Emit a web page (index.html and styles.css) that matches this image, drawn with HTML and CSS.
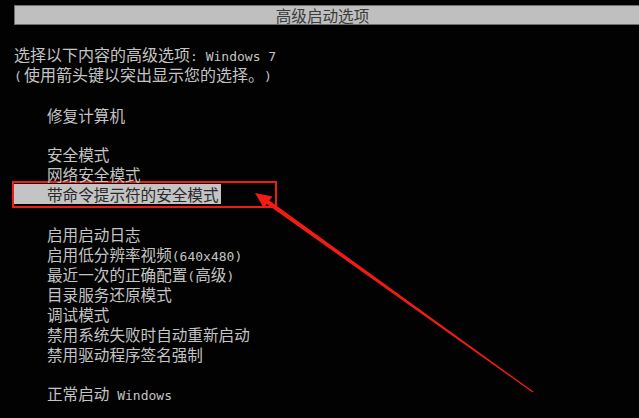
FILE: index.html
```html
<!DOCTYPE html>
<html lang="zh-CN">
<head>
<meta charset="utf-8">
<title>高级启动选项</title>
<link rel="stylesheet" href="styles.css">
</head>
<body>
<div class="screen">
  <div class="title">高级启动选项</div>
  <div class="intro">
    <div class="line">选择以下内容的高级选项<span class="en">: Windows 7</span></div>
    <div class="line"><span class="en paren">(</span>使用箭头键以突出显示您的选择。<span class="en paren">)</span></div>
  </div>
  <div class="menu">
    <div class="line blank first"></div>
    <div class="line item">修复计算机</div>
    <div class="line blank"></div>
    <div class="line item">安全模式</div>
    <div class="line item">网络安全模式</div>
    <div class="mark"><div class="selected">带命令提示符的安全模式</div></div>
    <div class="line blank"></div>
    <div class="line item">启用启动日志</div>
    <div class="line item">启用低分辨率视频<span class="en">(640x480)</span></div>
    <div class="line item">最近一次的正确配置<span class="en">(</span>高级<span class="en">)</span></div>
    <div class="line item">目录服务还原模式</div>
    <div class="line item">调试模式</div>
    <div class="line item">禁用系统失败时自动重新启动</div>
    <div class="line item">禁用驱动程序签名强制</div>
    <div class="line blank"></div>
    <div class="line item">正常启动<span class="en"> Windows</span></div>
  </div>
  <svg class="arrow" width="639" height="418" viewBox="0 0 639 418">
    <polygon fill="#f21c14" points="255,193 272.5,196.5 269.4,200.6 533.4,391.6 532.6,392.4 266.6,204 264,208.5"/>
  </svg>
</div>
</body>
</html>
```
FILE: styles.css
```css
html, body {
  margin: 0;
  padding: 0;
  background: #000;
}
.screen {
  position: relative;
  width: 639px;
  height: 418px;
  overflow: hidden;
  background: #020202;
  color: #c4c4c4;
  font-family: "Noto Sans CJK SC", "Noto Sans", sans-serif;
  font-size: 15.6px;
  padding-top: 5px;
  box-sizing: border-box;
}
.title {
  margin-left: 14px;
  margin-right: -4px;
  height: 18px;
  line-height: 18px;
  border: 1px solid #6e6e6e;
  background: #bfbfbf;
  color: #3a3a3a;
  text-align: center;
  padding-right: 12px;
  font-size: 15.6px;
}
.intro {
  margin-top: 19px;
  padding-left: 14px;
  font-size: 16px;
}
.line {
  height: 20px;
  line-height: 20px;
  white-space: nowrap;
}
.blank {
  height: 19px;
}
.blank.first {
  height: 21px;
}
.item {
  padding-left: 47px;
}
.en {
  font-family: "DejaVu Sans Mono", "Liberation Mono", monospace;
  font-size: 13px;
}
.paren {
  display: inline-block;
  width: 10px;
}
.mark {
  margin: -3px 0 -3px 12px;
  width: 261px;
  height: 22px;
  border: 2px solid #ee1c16;
  padding-top: 1px;
}
.selected {
  width: 174px;
  height: 20px;
  line-height: 20px;
  padding-left: 33px;
  background: #c4c4c4;
  color: #2a2a2a;
  white-space: nowrap;
}
.arrow {
  position: absolute;
  left: 0;
  top: 0;
}
```
